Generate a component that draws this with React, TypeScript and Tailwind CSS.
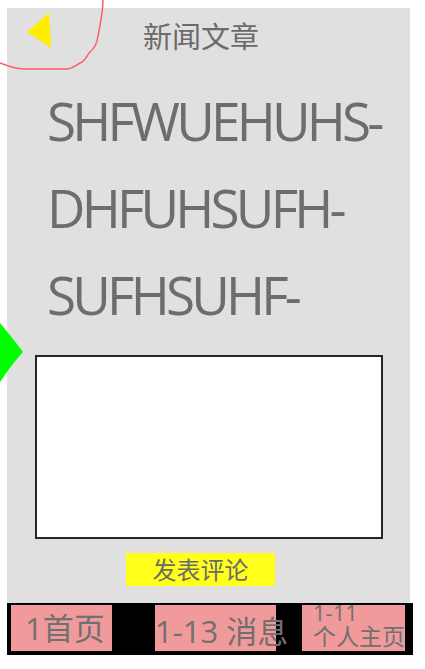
import React from "react";

const FONT = { fontFamily: '"Open Sans", "Noto Sans CJK SC", sans-serif' };

export default function App() {
  return (
    <div className="relative w-[425px] h-[669px] bg-white overflow-hidden" style={FONT}>
      <div className="ml-[7px] mt-[8px] w-[403px] h-[595px] bg-[#e0e0e0] flex flex-col">
        <header className="flex items-start h-[60px]">
          <svg width="26" height="38" viewBox="0 0 26 38" className="ml-[19px] mt-[5px]">
            <polygon points="1,19 23,0 25,35" fill="#ffee00" />
          </svg>
          <h1 className="ml-[91px] mt-[10px] text-[29px] leading-[38px] text-[#6b6b6b]">新闻文章</h1>
        </header>

        <p className="mt-[9px] pl-[40px] pr-[10px] text-[53px] leading-[87px] tracking-[-3.8px] text-[#6d6d6d]">
          SHFWUEHUHS-DHFUHSUFH-SUFHSUHF-
        </p>

        <div className="ml-[28px] mt-[17px] w-[348px] h-[184px] bg-white border-2 border-[#2a2323]" />

        <button className="ml-[119px] mt-[14px] w-[149px] h-[33px] bg-[#ffff1a] text-[24px] leading-[33px] text-[#6b6b6b]">
          发表评论
        </button>
      </div>

      <nav className="ml-[7px] w-[406px] h-[52px] bg-black flex items-start pt-[2px]">
        <div className="ml-[4px] w-[101px] h-[46px] bg-[#f09a9c] pl-[14px] text-[31px] leading-[46px] text-[#707070]">
          1首页
        </div>
        <div className="ml-[43px] w-[121px] h-[46px] bg-[#f09a9c] text-[31px] leading-[52px] text-[#707070] whitespace-nowrap">
          1-13 消息
        </div>
        <div className="ml-[26px] w-[103px] h-[46px] bg-[#f09a9c] pl-[11px] flex flex-col text-[#707070]">
          <span className="text-[22px] leading-[20px] -mt-[3px]">1-11</span>
          <span className="text-[23px] leading-[29px] whitespace-nowrap">个人主页</span>
        </div>
      </nav>

      <svg width="110" height="75" viewBox="0 0 110 75" className="absolute left-0 top-0 pointer-events-none">
        <path
          d="M0,63 C10,67 16,69 24,69 L68,69 C74,68 77,64 82,62 C86,60 87,55 90,52 C95,48 97,44 98,36 C100,25 103,12 103,0"
          fill="none"
          stroke="#ff5a6e"
          strokeWidth="1.5"
        />
      </svg>

      <svg width="26" height="70" viewBox="0 0 26 70" className="absolute left-0 top-[318px] pointer-events-none">
        <path d="M0,5 Q14,22 23,34 Q12,46 0,64 Z" fill="#00ff00" />
      </svg>
    </div>
  );
}
